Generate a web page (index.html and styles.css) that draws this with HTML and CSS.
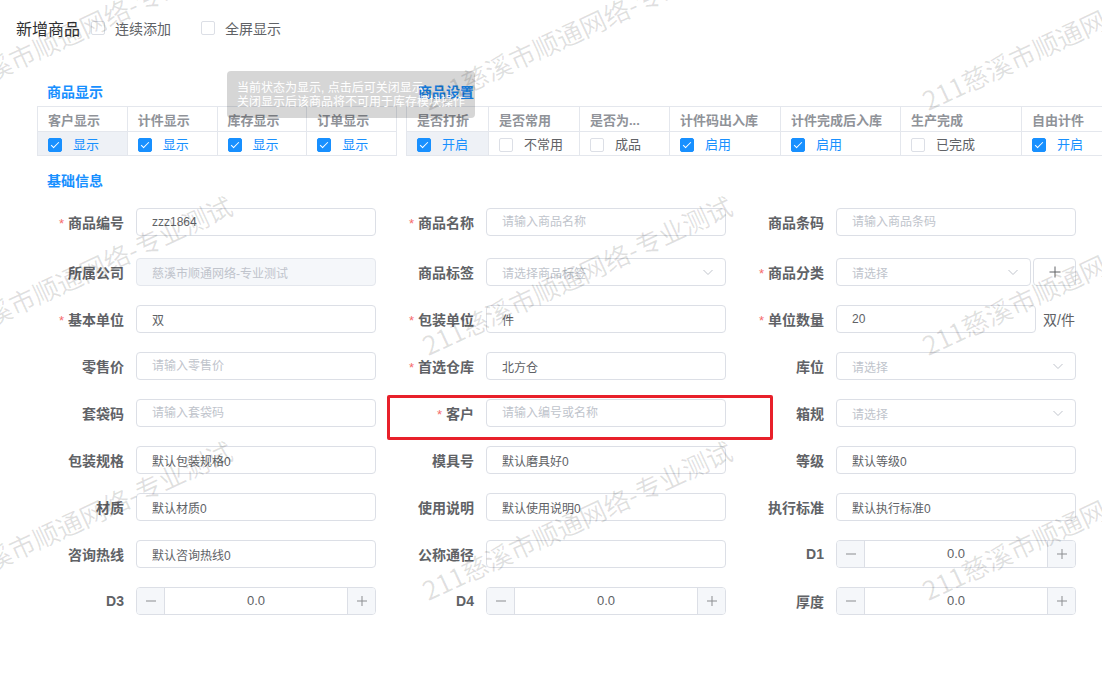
FILE: index.html
```html
<!DOCTYPE html>
<html lang="zh-cn">
<head>
    <meta charset="UTF-8">
    <meta name="viewport" content="width=device-width, initial-scale=1.0">
    <title>新增商品</title>
    <link rel="stylesheet" href="styles.css">
</head>
<body>
    <div class="top-bar">
        <span class="page-title">新增商品</span>
        <label class="check"><span class="box"></span>连续添加</label>
        <label class="check"><span class="box"></span>全屏显示</label>
    </div>

    <div class="show-row">
        <div class="show-block">
            <div class="block-title">商品显示</div>
            <table class="opt-table show-table">
                <tr>
                    <th>客户显示</th><th>计件显示</th><th>库存显示</th><th>订单显示</th>
                </tr>
                <tr>
                    <td class="hover"><span class="cb on"></span><span class="on-text">显示</span></td>
                    <td><span class="cb on"></span><span class="on-text">显示</span></td>
                    <td><span class="cb on"></span><span class="on-text">显示</span></td>
                    <td><span class="cb on"></span><span class="on-text">显示</span></td>
                </tr>
            </table>
        </div>
        <div class="setting-block">
            <div class="block-title">商品设置</div>
            <table class="opt-table setting-table">
                <colgroup>
                    <col style="width:82px"><col style="width:91px"><col style="width:90px"><col style="width:111px">
                    <col style="width:120px"><col style="width:121px"><col style="width:110px">
                </colgroup>
                <tr>
                    <th>是否打折</th><th>是否常用</th><th>是否为...</th><th>计件码出入库</th>
                    <th>计件完成后入库</th><th>生产完成</th><th>自由计件</th>
                </tr>
                <tr>
                    <td class="hover"><span class="cb on"></span><span class="on-text">开启</span></td>
                    <td><span class="cb"></span><span>不常用</span></td>
                    <td><span class="cb"></span><span>成品</span></td>
                    <td><span class="cb on"></span><span class="on-text">启用</span></td>
                    <td><span class="cb on"></span><span class="on-text">启用</span></td>
                    <td><span class="cb"></span><span>已完成</span></td>
                    <td><span class="cb on"></span><span class="on-text">开启</span></td>
                </tr>
            </table>
        </div>
    </div>

    <div class="tip">
        <div>当前状态为显示, 点击后可关闭显示</div>
        <div>关闭显示后该商品将不可用于库存模块操作</div>
    </div>

    <div class="basic-title">基础信息</div>

    <div class="form-grid">
        <div class="form-item">
            <label class="form-label"><span class="req">*</span>商品编号</label>
            <input class="form-input" value="zzz1864">
        </div>
        <div class="form-item">
            <label class="form-label"><span class="req">*</span>商品名称</label>
            <input class="form-input" placeholder="请输入商品名称">
        </div>
        <div class="form-item">
            <label class="form-label">商品条码</label>
            <input class="form-input" placeholder="请输入商品条码">
        </div>

        <div class="form-item">
            <label class="form-label">所属公司</label>
            <input class="form-input disabled" value="慈溪市顺通网络-专业测试" disabled>
        </div>
        <div class="form-item">
            <label class="form-label">商品标签</label>
            <div class="form-select">
                <span>请选择商品标签</span>
                <svg width="12" height="12" viewBox="0 0 12 12"><path d="M1.5 4 L6 8.5 L10.5 4" fill="none" stroke="#c0c4cc" stroke-width="1"/></svg>
            </div>
        </div>
        <div class="form-item">
            <label class="form-label"><span class="req">*</span>商品分类</label>
            <div class="select-add">
                <div class="form-select narrow">
                    <span>请选择</span>
                    <svg width="12" height="12" viewBox="0 0 12 12"><path d="M1.5 4 L6 8.5 L10.5 4" fill="none" stroke="#c0c4cc" stroke-width="1"/></svg>
                </div>
                <div class="add-btn">
                    <svg width="12" height="12" viewBox="0 0 12 12"><path d="M6 0.5 V11.5 M0.5 6 H11.5" stroke="#606266" stroke-width="1"/></svg>
                </div>
            </div>
        </div>

        <div class="form-item">
            <label class="form-label"><span class="req">*</span>基本单位</label>
            <input class="form-input" value="双">
        </div>
        <div class="form-item">
            <label class="form-label"><span class="req">*</span>包装单位</label>
            <input class="form-input" value="件">
        </div>
        <div class="form-item">
            <label class="form-label"><span class="req">*</span>单位数量</label>
            <input class="form-input short" value="20">
            <span class="unit">双/件</span>
        </div>

        <div class="form-item">
            <label class="form-label">零售价</label>
            <input class="form-input" placeholder="请输入零售价">
        </div>
        <div class="form-item">
            <label class="form-label"><span class="req">*</span>首选仓库</label>
            <input class="form-input" value="北方仓">
        </div>
        <div class="form-item">
            <label class="form-label">库位</label>
            <div class="form-select">
                <span>请选择</span>
                <svg width="12" height="12" viewBox="0 0 12 12"><path d="M1.5 4 L6 8.5 L10.5 4" fill="none" stroke="#c0c4cc" stroke-width="1"/></svg>
            </div>
        </div>

        <div class="form-item">
            <label class="form-label">套袋码</label>
            <input class="form-input" placeholder="请输入套袋码">
        </div>
        <div class="form-item marked">
            <label class="form-label"><span class="req">*</span>客户</label>
            <input class="form-input" placeholder="请输入编号或名称">
        </div>
        <div class="form-item">
            <label class="form-label">箱规</label>
            <div class="form-select">
                <span>请选择</span>
                <svg width="12" height="12" viewBox="0 0 12 12"><path d="M1.5 4 L6 8.5 L10.5 4" fill="none" stroke="#c0c4cc" stroke-width="1"/></svg>
            </div>
        </div>

        <div class="form-item">
            <label class="form-label">包装规格</label>
            <input class="form-input" value="默认包装规格0">
        </div>
        <div class="form-item">
            <label class="form-label">模具号</label>
            <input class="form-input" value="默认磨具好0">
        </div>
        <div class="form-item">
            <label class="form-label">等级</label>
            <input class="form-input" value="默认等级0">
        </div>

        <div class="form-item">
            <label class="form-label">材质</label>
            <input class="form-input" value="默认材质0">
        </div>
        <div class="form-item">
            <label class="form-label">使用说明</label>
            <input class="form-input" value="默认使用说明0">
        </div>
        <div class="form-item">
            <label class="form-label">执行标准</label>
            <input class="form-input" value="默认执行标准0">
        </div>

        <div class="form-item">
            <label class="form-label">咨询热线</label>
            <input class="form-input" value="默认咨询热线0">
        </div>
        <div class="form-item">
            <label class="form-label">公称通径</label>
            <input class="form-input">
        </div>
        <div class="form-item">
            <label class="form-label">D1</label>
            <div class="stepper">
                <span class="step-btn minus"><svg width="10" height="10" viewBox="0 0 10 10"><path d="M0 5 H10" stroke="#606266" stroke-width="1"/></svg></span>
                <span class="step-val">0.0</span>
                <span class="step-btn plus"><svg width="10" height="10" viewBox="0 0 10 10"><path d="M5 0 V10 M0 5 H10" stroke="#606266" stroke-width="1"/></svg></span>
            </div>
        </div>

        <div class="form-item">
            <label class="form-label">D3</label>
            <div class="stepper">
                <span class="step-btn minus"><svg width="10" height="10" viewBox="0 0 10 10"><path d="M0 5 H10" stroke="#606266" stroke-width="1"/></svg></span>
                <span class="step-val">0.0</span>
                <span class="step-btn plus"><svg width="10" height="10" viewBox="0 0 10 10"><path d="M5 0 V10 M0 5 H10" stroke="#606266" stroke-width="1"/></svg></span>
            </div>
        </div>
        <div class="form-item">
            <label class="form-label">D4</label>
            <div class="stepper">
                <span class="step-btn minus"><svg width="10" height="10" viewBox="0 0 10 10"><path d="M0 5 H10" stroke="#606266" stroke-width="1"/></svg></span>
                <span class="step-val">0.0</span>
                <span class="step-btn plus"><svg width="10" height="10" viewBox="0 0 10 10"><path d="M5 0 V10 M0 5 H10" stroke="#606266" stroke-width="1"/></svg></span>
            </div>
        </div>
        <div class="form-item">
            <label class="form-label">厚度</label>
            <div class="stepper">
                <span class="step-btn minus"><svg width="10" height="10" viewBox="0 0 10 10"><path d="M0 5 H10" stroke="#606266" stroke-width="1"/></svg></span>
                <span class="step-val">0.0</span>
                <span class="step-btn plus"><svg width="10" height="10" viewBox="0 0 10 10"><path d="M5 0 V10 M0 5 H10" stroke="#606266" stroke-width="1"/></svg></span>
            </div>
        </div>
    </div>

    <div class="watermark">
        <div class="wm-grid">
            <span class="wm">211慈溪市顺通网络-专业测试</span>
            <span class="wm">211慈溪市顺通网络-专业测试</span>
            <span class="wm">211慈溪市顺通网络-专业测试</span>
            <span class="wm">211慈溪市顺通网络-专业测试</span>
            <span class="wm">211慈溪市顺通网络-专业测试</span>
            <span class="wm">211慈溪市顺通网络-专业测试</span>
            <span class="wm">211慈溪市顺通网络-专业测试</span>
            <span class="wm">211慈溪市顺通网络-专业测试</span>
            <span class="wm">211慈溪市顺通网络-专业测试</span>
        </div>
    </div>
</body>
</html>
```

FILE: styles.css
```css
body {
    margin: 0;
    width: 1102px;
    height: 677px;
    overflow: hidden;
    position: relative;
    background: #fff;
    color: #606266;
    font-family: "Liberation Sans", "Noto Sans CJK SC", sans-serif;
}
.top-bar {
    display: flex;
    align-items: center;
    height: 20px;
    padding: 18px 0 0 16px;
}
.page-title {
    font-size: 16px;
    color: #303133;
    margin-right: 11px;
}
.check {
    display: flex;
    align-items: center;
    font-size: 14px;
    color: #606266;
    margin-right: 30px;
}
.check .box {
    width: 14px;
    height: 14px;
    box-sizing: border-box;
    border: 1px solid #dcdfe6;
    border-radius: 2px;
    margin-right: 10px;
    background: #fff;
}
.show-row {
    display: flex;
    gap: 9px;
    padding-left: 37px;
    margin-top: 44px;
}
.setting-block {
    flex: 1;
    min-width: 0;
    overflow: hidden;
}
.block-title {
    font-size: 14px;
    font-weight: bold;
    color: #1890ff;
    line-height: 20px;
    padding-left: 10px;
    margin-bottom: 4px;
}
.setting-block .block-title {
    padding-left: 12px;
}
.opt-table {
    border-collapse: collapse;
    table-layout: fixed;
}
.show-table {
    width: 360px;
}
.setting-table {
    width: 725px;
}
.opt-table th, .opt-table td {
    border: 1px solid #e4e7ed;
    padding: 0 0 0 10px;
    text-align: left;
    white-space: nowrap;
    overflow: hidden;
    font-size: 13px;
}
.opt-table th {
    height: 24px;
    font-weight: bold;
    color: #909399;
}
.opt-table td {
    height: 23px;
    color: #606266;
}
.opt-table td.hover {
    background: #eef1f6;
}
.cb {
    display: inline-block;
    vertical-align: middle;
    width: 14px;
    height: 14px;
    box-sizing: border-box;
    border: 1px solid #dcdfe6;
    border-radius: 2px;
    background: #fff;
    margin-right: 11px;
    position: relative;
    top: -1px;
}
.cb.on {
    background: #1890ff;
    border-color: #1890ff;
}
.cb.on::after {
    content: "";
    position: absolute;
    left: 4px;
    top: 1px;
    width: 3px;
    height: 7px;
    border: solid #fff;
    border-width: 0 1px 1px 0;
    transform: rotate(45deg);
}
.on-text {
    color: #1890ff;
}
.tip {
    position: absolute;
    left: 227px;
    top: 71px;
    width: 248px;
    height: 47px;
    box-sizing: border-box;
    padding: 10px 0 0 10px;
    border-radius: 4px;
    background: rgba(0, 0, 0, 0.16);
    color: #fff;
    font-size: 12px;
    line-height: 14px;
    white-space: nowrap;
    overflow: hidden;
    z-index: 4;
}
.basic-title {
    font-size: 14px;
    font-weight: bold;
    color: #1890ff;
    line-height: 20px;
    padding-left: 47px;
    margin-top: 15px;
}
.form-grid {
    display: grid;
    grid-template-columns: repeat(3, 350px);
    row-gap: 19px;
    margin: 17px 0 0 26px;
}
.form-item {
    display: flex;
    align-items: center;
    height: 28px;
}
.form-item:nth-child(-n+3) {
    margin-bottom: 3px;
}
.form-label {
    width: 110px;
    flex: none;
    box-sizing: border-box;
    padding-right: 12px;
    text-align: right;
    font-size: 14px;
    font-weight: bold;
    color: #606266;
    white-space: nowrap;
}
.req {
    color: #f56c6c;
    font-weight: normal;
    font-size: 13px;
    margin-right: 4px;
}
.form-input {
    width: 240px;
    height: 28px;
    box-sizing: border-box;
    border: 1px solid #dcdfe6;
    border-radius: 4px;
    padding: 0 15px;
    font-family: "Liberation Sans", "Noto Sans CJK SC", sans-serif;
    font-size: 12px;
    color: #606266;
    background: #fff;
    outline: none;
}
.form-input::placeholder {
    color: #c0c4cc;
}
.form-input.disabled {
    background: #f5f7fa;
    border-color: #e4e7ed;
    color: #c0c4cc;
}
.form-input.short {
    width: 200px;
}
.unit {
    margin-left: 7px;
    font-size: 14px;
    color: #606266;
}
.form-select {
    display: flex;
    align-items: center;
    justify-content: space-between;
    width: 240px;
    height: 28px;
    box-sizing: border-box;
    border: 1px solid #dcdfe6;
    border-radius: 4px;
    padding: 0 11px 0 15px;
    font-size: 12px;
    color: #c0c4cc;
}
.form-select.narrow {
    width: 195px;
}
.select-add {
    display: flex;
    gap: 2px;
}
.add-btn {
    display: flex;
    align-items: center;
    justify-content: center;
    width: 43px;
    height: 28px;
    box-sizing: border-box;
    border: 1px solid #dcdfe6;
    border-radius: 4px;
    background: #fff;
}
.stepper {
    display: flex;
    width: 240px;
    height: 28px;
    box-sizing: border-box;
    border: 1px solid #dcdfe6;
    border-radius: 4px;
    overflow: hidden;
}
.step-btn {
    display: flex;
    align-items: center;
    justify-content: center;
    width: 27px;
    background: #f5f7fa;
}
.step-btn svg {
    opacity: 0.7;
}
.step-btn.minus {
    border-right: 1px solid #dcdfe6;
}
.step-btn.plus {
    border-left: 1px solid #dcdfe6;
}
.step-val {
    flex: 1;
    text-align: center;
    line-height: 26px;
    font-size: 13px;
    color: #606266;
}
.marked {
    position: relative;
}
.marked::after {
    content: "";
    position: absolute;
    left: 11px;
    top: -4px;
    width: 386px;
    height: 45px;
    box-sizing: border-box;
    border: 3px solid #e8202a;
    border-radius: 2px;
}
.watermark {
    position: absolute;
    left: 0;
    top: 0;
    width: 1102px;
    height: 677px;
    overflow: hidden;
    pointer-events: none;
    z-index: 5;
}
.wm-grid {
    display: grid;
    grid-template-columns: repeat(3, 500px);
    grid-auto-rows: 245px;
    align-items: start;
    margin-left: -70px;
    padding-top: 85px;
}
.wm {
    display: block;
    width: 340px;
    height: 30px;
    font-family: "Noto Sans CJK SC", sans-serif;
    font-size: 26px;
    line-height: 30px;
    white-space: nowrap;
    color: rgba(0, 0, 0, 0.12);
    transform-origin: 0 100%;
    transform: rotate(-25deg);
}
```
